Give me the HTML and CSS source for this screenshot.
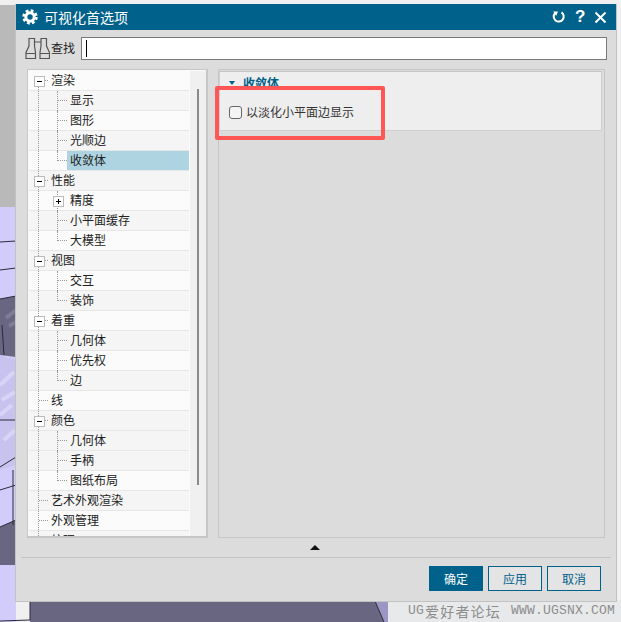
FILE: index.html
```html
<!DOCTYPE html>
<html lang="zh">
<head>
<meta charset="utf-8">
<title>可视化首选项</title>
<link rel="stylesheet" href="styles.css">
</head>
<body>
<svg class="scene" width="621" height="622" viewBox="0 0 621 622">
  <rect class="s-top" x="0" y="0" width="621" height="622"/>
  <rect class="s-grey" x="0" y="5" width="16" height="203"/>
  <rect class="s-lav" x="0" y="207" width="16" height="415"/>
  <polygon class="s-lavd" points="0,355 16,360 16,465 0,470"/>
  <path class="s-streak" d="M0 385 14 372M2 400 15 392M0 415 12 405M4 440 15 430"/>
  <polygon class="s-dark" points="0,299 16,296 16,357 0,355"/>
  <path class="s-streak2" d="M6 318 16 310M9 326 16 322"/>
  <polygon class="s-dark" points="0,527 16,520 16,565 0,565"/>
  <polygon class="s-dark" points="30,600 375,600 384,622 30,622"/>
  <polygon class="s-lav2" points="375,600 388,600 388,622 384,622"/>
  <rect class="s-light" x="388" y="600" width="233" height="22"/>
  <path class="s-line" d="M0 242 16 241M0 270 16 268M0 299 16 296M0 420 16 420M0 467 16 457M0 490 16 485M0 527 16 520M13 470 13 525M2 325 4 355M30 601 30 620 0 621M375 601 384 622"/>
</svg>

<main class="dialog">
  <header class="titlebar">
    <svg class="gear" width="16" height="16" viewBox="0 0 16 16">
      <circle class="gear-teeth" cx="8" cy="8" r="6"/>
      <circle class="gear-ring" cx="8" cy="8" r="4.2"/>
    </svg>
    <h1 class="title">可视化首选项</h1>
    <div class="title-actions">
      <svg width="14" height="14" viewBox="0 0 14 14"><path class="ti-stroke" d="M9.5 2.4A5 5 0 1 1 3 3.2"/><path class="ti-fill" d="M1.2 1.5 6 1.5 4.2 6Z"/></svg>
      <span class="help">?</span>
      <svg width="13" height="13" viewBox="0 0 13 13"><path class="ti-stroke" d="M1.5 1.5 11.5 11.5M11.5 1.5 1.5 11.5"/></svg>
    </div>
  </header>

  <div class="search">
    <svg class="binoculars" width="25" height="24" viewBox="0 0 25 24">
      <path class="bino" d="M4 2.5H9.5V10L10.5 16.5V22.5H1V16.5L4 10ZM16 2.5H21.5V10L24.5 16.5V22.5H15V16.5L16 10ZM9.5 6H16M1 17.5H10.5M15 17.5H24.5"/>
    </svg>
    <span class="search-label">查找</span>
    <div class="search-input"><span class="caret"></span></div>
  </div>

  <div class="content">
    <nav class="tree">
      <div class="rows">
        <span class="root-guide"></span>
        <div class="row top branch">渲染</div>
        <div class="row child alt">显示</div>
        <div class="row child">图形</div>
        <div class="row child alt">光顺边</div>
        <div class="row child last sel"><span class="sel-text">收敛体</span></div>
        <div class="row top branch alt">性能</div>
        <div class="row child plus">精度</div>
        <div class="row child alt">小平面缓存</div>
        <div class="row child last">大模型</div>
        <div class="row top branch alt">视图</div>
        <div class="row child">交互</div>
        <div class="row child last alt">装饰</div>
        <div class="row top branch">着重</div>
        <div class="row child alt">几何体</div>
        <div class="row child">优先权</div>
        <div class="row child last alt">边</div>
        <div class="row top leaf">线</div>
        <div class="row top branch alt">颜色</div>
        <div class="row child alt">几何体</div>
        <div class="row child alt">手柄</div>
        <div class="row child last">图纸布局</div>
        <div class="row top leaf alt">艺术外观渲染</div>
        <div class="row top leaf">外观管理</div>
        <div class="row top leaf alt">纹理</div>
      </div>
      <div class="scrollbar"><span class="thumb"></span></div>
    </nav>

    <section class="panel">
      <div class="group">
        <div class="group-head"><span class="tri"></span><span>收敛体</span></div>
        <label class="check"><span class="box"></span>以淡化小平面边显示</label>
      </div>
    </section>
  </div>

  <div class="collapse"><span class="collapse-tri"></span></div>

  <footer class="actions">
    <button class="btn primary">确定</button>
    <button class="btn">应用</button>
    <button class="btn">取消</button>
  </footer>
</main>

<div class="callout"></div>
<div class="watermark"><span class="wm-a">UG</span><span class="wm-c">爱好者论坛</span><span class="wm-a">WWW.UGSNX.COM</span></div>
</body>
</html>
```

FILE: styles.css
```css
* { box-sizing: border-box; }
html, body { margin: 0; padding: 0; }
body {
  width: 621px;
  height: 622px;
  overflow: hidden;
  position: relative;
  background: #f0f0f0;
  font: 12px/20px "Noto Sans CJK SC", "Noto Sans", sans-serif;
  color: #222;
}

.scene { position: absolute; left: 0; top: 0; display: block; }
.s-top { fill: #f0f0f0; }
.s-grey { fill: #b9b9b9; }
.s-lav { fill: #d2ccfa; }
.s-lav2 { fill: #9c96c4; }
.s-lavd { fill: #c8c2ee; }
.s-dark { fill: #686680; }
.s-light { fill: #e8e9ea; }
.s-line { fill: none; stroke: #2c2a3a; stroke-width: 1; }
.s-streak { fill: none; stroke: #d8d4f6; stroke-width: 4; }
.s-streak2 { fill: none; stroke: #7e7c96; stroke-width: 4; }

.dialog {
  position: absolute;
  left: 15px;
  top: 4px;
  width: 602px;
  height: 598px;
  display: flex;
  flex-direction: column;
  background: #dcdcdc;
  border: 1px solid #c2c2c2;
  border-top: 0;
}

.titlebar {
  height: 26px;
  flex: none;
  display: flex;
  align-items: center;
  background: #00618a;
  color: #fff;
  padding: 0 9px 0 6px;
}
.gear { flex: none; }
.gear-teeth { fill: none; stroke: #fff; stroke-width: 3.4; stroke-dasharray: 2.6 2.1; }
.gear-ring { fill: none; stroke: #fff; stroke-width: 3; }
.title { margin: 0 0 0 6px; font-size: 14px; font-weight: 400; line-height: 26px; }
.title-actions { margin-left: auto; display: flex; align-items: center; gap: 9px; }
.title-actions svg { display: block; }
.ti-stroke { fill: none; stroke: #fff; stroke-width: 2; }
.ti-fill { fill: #fff; }
.help { font: 700 17px/26px "Liberation Sans", sans-serif; width: 10px; text-align: center; }

.search {
  height: 34px;
  flex: none;
  display: flex;
  align-items: center;
  padding: 2px 9px 0 9px;
}
.binoculars { flex: none; display: block; }
.bino { fill: none; stroke: #555; stroke-width: 1.2; }
.search-label { margin-left: 1px; width: 30px; flex: none; }
.search-input {
  flex: 1;
  height: 23px;
  background: #fff;
  border: 1px solid #7a7a7a;
  display: flex;
  align-items: center;
  padding-left: 4px;
}
.caret { width: 1px; height: 17px; background: #000; }

.content {
  height: 469px;
  flex: none;
  display: flex;
  padding: 0 11px 0 11px;
  margin-top: 5px;
  gap: 10px;
}

.tree {
  width: 181px;
  flex: none;
  display: flex;
  background: #fbfbfb;
  border: 1px solid #c6c6c6;
  border-right-width: 2px;
  border-bottom-width: 2px;
  padding: 1px 0 0 1px;
  overflow: hidden;
}
.rows { width: 160px; flex: none; position: relative; overflow: hidden; }
.root-guide {
  position: absolute;
  left: 9px;
  top: 15px;
  bottom: 0;
  border-left: 1px dotted #999;
  z-index: 1;
}
.row {
  height: 20px;
  position: relative;
  background: #fbfbfb;
  border-bottom: 1px solid #e6e6e6;
  line-height: 17px;
  white-space: nowrap;
}
.row.alt { background: #f5f5f5; }
.top { padding-left: 22px; }
.child { padding-left: 41px; }
.top::after {
  content: "";
  position: absolute;
  left: 10px;
  top: 9px;
  width: 9px;
  border-top: 1px dotted #999;
}
.branch::after { left: 15px; width: 4px; }
.branch::before {
  content: "";
  position: absolute;
  left: 5px;
  top: 5px;
  width: 9px;
  height: 9px;
  background:
    linear-gradient(#000, #000) center / 5px 1px no-repeat,
    #fff;
  border: 1px solid #bbb;
  z-index: 2;
}
.child::before {
  content: "";
  position: absolute;
  left: 28px;
  top: 0;
  height: 20px;
  border-left: 1px dotted #999;
}
.child.last::before { height: 10px; }
.child::after {
  content: "";
  position: absolute;
  left: 29px;
  top: 9px;
  width: 9px;
  border-top: 1px dotted #999;
}
.plus::after {
  left: 24px;
  top: 5px;
  width: 9px;
  height: 9px;
  background:
    linear-gradient(#000, #000) center / 5px 1px no-repeat,
    linear-gradient(#000, #000) center / 1px 5px no-repeat,
    #fff;
  border: 1px solid #bbb;
}
.sel { padding-left: 38px; background: #fbfbfb; }
.sel-text { display: block; height: 19px; background: #add4e0; padding-left: 3px; }

.scrollbar { flex: 1; background: #f0f0f0; margin-left: 1px; padding-top: 18px; display: flex; justify-content: center; }
.thumb { width: 2px; height: 396px; background: #8a8a8a; }

.panel {
  flex: 1;
  border: 1px solid #c6c6c6;
  background: #dcdcdc;
  padding: 1px 2px 0 0;
}
.group {
  height: 60px;
  background: #eeeeee;
  border: 1px solid #cfcfcf;
  border-top-color: #c6c6c6;
  padding-left: 9px;
}
.group-head {
  height: 22px;
  display: flex;
  align-items: center;
  color: #00618a;
  font-weight: 700;
}
.tri {
  width: 0;
  height: 0;
  border-left: 3.5px solid transparent;
  border-right: 3.5px solid transparent;
  border-top: 4px solid #00618a;
  margin-right: 8px;
}
.check { display: flex; align-items: center; height: 20px; margin-top: 8px; color: #333; }
.box {
  width: 13px;
  height: 13px;
  border: 1px solid #666;
  border-radius: 3px;
  background: #f4f4f4;
  margin-right: 4px;
}

.collapse {
  height: 20px;
  flex: none;
  display: flex;
  justify-content: center;
  align-items: center;
  margin: 0 5px;
  border-bottom: 1px solid #c4c4c4;
  padding-right: 2px;
}
.collapse-tri {
  width: 0;
  height: 0;
  border-left: 5px solid transparent;
  border-right: 5px solid transparent;
  border-bottom: 5px solid #111;
}

.actions {
  display: flex;
  justify-content: flex-end;
  gap: 5px;
  padding: 8px 15px 0 0;
}
.btn {
  width: 54px;
  height: 25px;
  padding: 0;
  background: #e4e4e4;
  border: 1px solid #00618a;
  color: #00618a;
  font: inherit;
  line-height: 22px;
}
.btn.primary { background: #00618a; color: #fff; }

.callout {
  position: absolute;
  left: 215px;
  top: 86px;
  width: 170px;
  height: 54px;
  border: 4px solid #ff5555;
  border-radius: 2px;
}
.watermark {
  position: absolute;
  left: 408px;
  top: 600px;
  width: 213px;
  height: 21px;
  display: flex;
  align-items: center;
  color: #8d8d8d;
  white-space: nowrap;
}
.wm-a { font: 13px/20px "Liberation Mono", monospace; letter-spacing: 0.2px; }
.wm-c { font: 14px/20px "Noto Sans CJK SC", sans-serif; letter-spacing: 1.2px; margin: 0 10px 0 1px; }
```
